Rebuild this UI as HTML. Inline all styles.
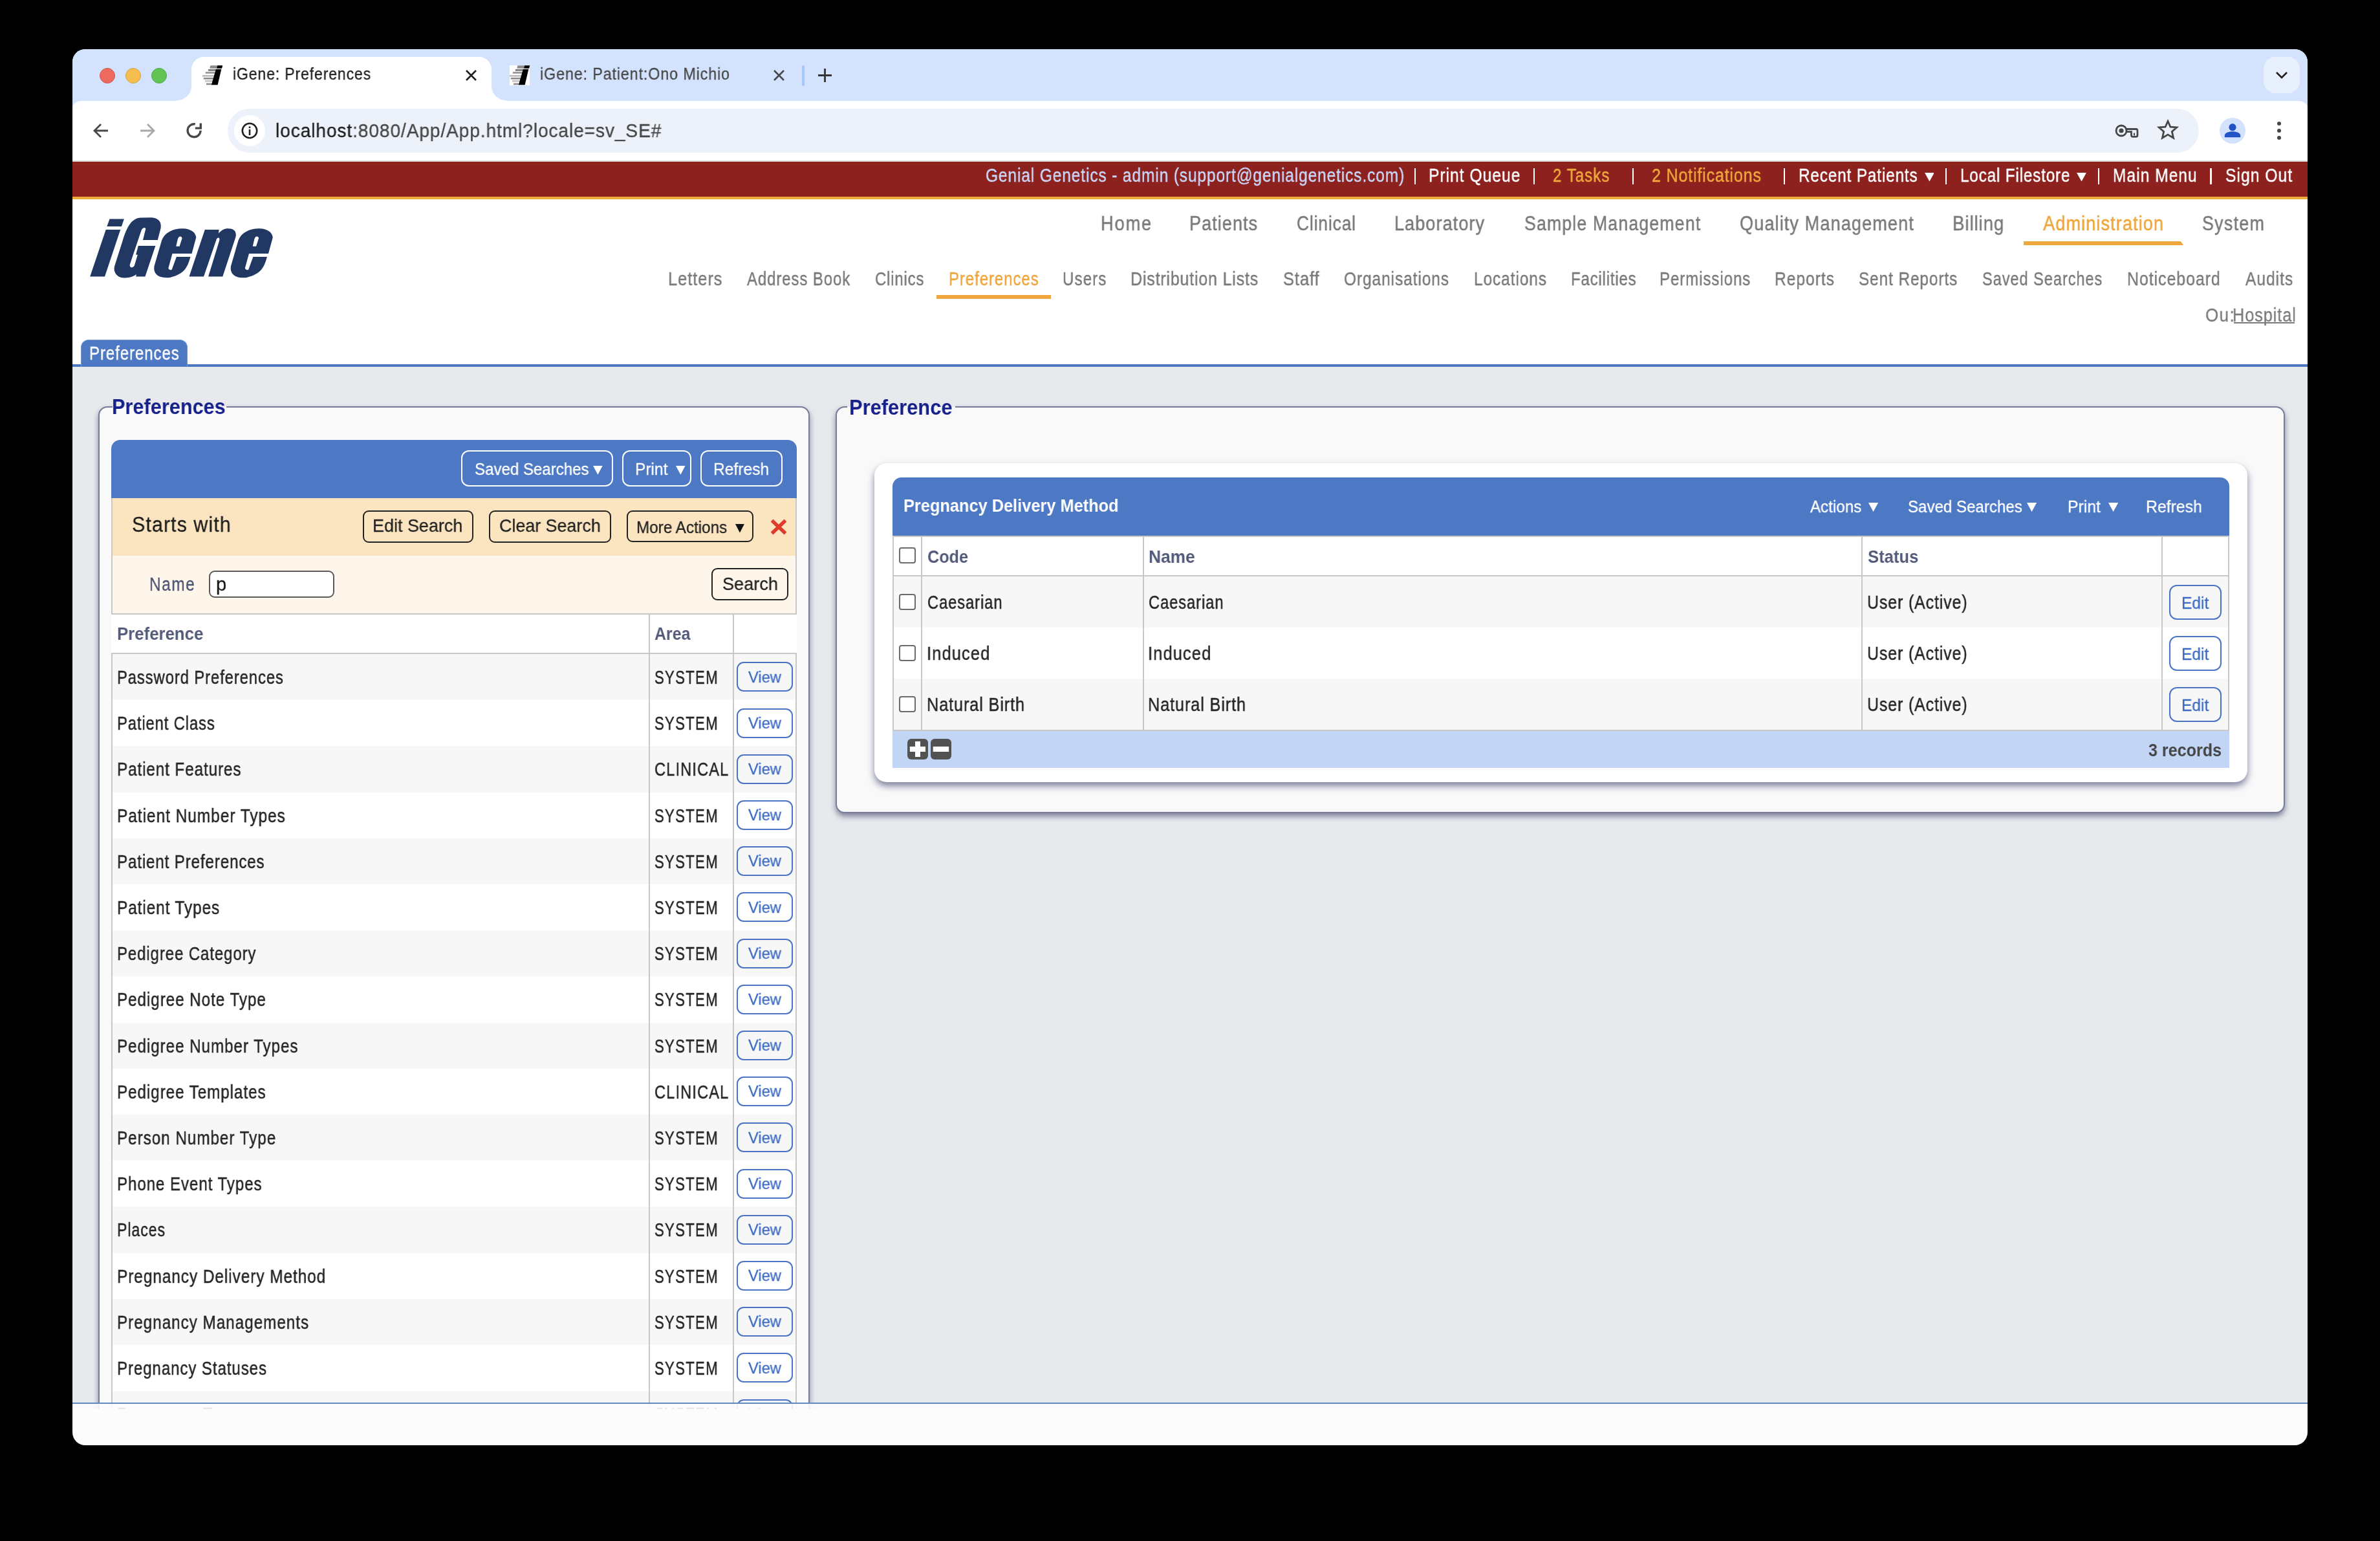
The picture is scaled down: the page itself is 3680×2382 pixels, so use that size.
<!DOCTYPE html>
<html><head><meta charset="utf-8"><title>iGene: Preferences</title>
<style>
html,body{margin:0;padding:0;}
body{width:3680px;height:2382px;background:#000;position:relative;overflow:hidden;font-family:"Liberation Sans",sans-serif;}
.a{position:absolute;box-sizing:border-box;}
.t{position:absolute;white-space:nowrap;line-height:1;transform-origin:0 0;will-change:transform;}
</style></head><body>

<div class="a" style="left:112px;top:76px;width:3456px;height:2158px;border-radius:20px;overflow:hidden;background:#fcfcfc">
<div class="a" style="left:-112px;top:-76px;width:3680px;height:2382px">
<div class="a" style="left:112px;top:76px;width:3456.00px;height:124.00px;background:#d3e3fd;"></div>
<div class="a" style="left:112px;top:155.5px;width:3456.00px;height:94.50px;background:#ffffff;border-radius:14px 14px 0 0/11px 11px 0 0;"></div>
<svg class="a" style="left:272px;top:88px" width="512" height="68" viewBox="0 0 512 68"><path d="M0 67.5 A24 22 0 0 0 24 45.5 L24 19 A19 19 0 0 1 43 0 L469 0 A19 19 0 0 1 488 19 L488 45.5 A24 22 0 0 0 512 67.5 L512 68 L0 68 Z" fill="#fff"/></svg>
<div class="a" style="left:112px;top:248px;width:3456.00px;height:2.00px;background:#d9d9d9;"></div>
<div class="a" style="left:112px;top:250px;width:3456.00px;height:54.00px;background:#8c211e;"></div>
<div class="a" style="left:112px;top:304px;width:3456.00px;height:4.00px;background:#f0a93c;"></div>
<div class="a" style="left:112px;top:308px;width:3456.00px;height:255.00px;background:#ffffff;"></div>
<div class="a" style="left:112px;top:563px;width:3456.00px;height:4.00px;background:#4a76c2;"></div>
<div class="a" style="left:112px;top:567px;width:3456.00px;height:1611.00px;background:#e8e9ed;"></div>
<div class="a" style="left:154px;top:105px;width:24px;height:24px;border-radius:50%;background:#ee6a5f;border:1px solid #d0584c"></div>
<div class="a" style="left:194px;top:105px;width:24px;height:24px;border-radius:50%;background:#f5bd4f;border:1px solid #d6a243"></div>
<div class="a" style="left:234px;top:105px;width:24px;height:24px;border-radius:50%;background:#61c454;border:1px solid #52a842"></div>
<svg class="a" style="left:313px;top:101px" width="32" height="31" viewBox="0 0 32 31"><g><path d="M12.4 0.2H31.2L30 4.8H11.2Z" fill="#8a8a8a"/><path d="M23.3 0.2H31.2L30 4.8H22.1Z" fill="#000"/><rect x="8.9" y="6" width="12.5" height="2.8" fill="#7a7a7a"/><rect x="4.8" y="10" width="16" height="2.8" fill="#9a9a9a"/><rect x="0" y="15" width="19" height="2.7" fill="#bdbdbd"/><rect x="1.8" y="19" width="16.5" height="2.6" fill="#8c8c8c"/><rect x="4" y="23" width="12" height="2.6" fill="#c4c4c4"/><rect x="6" y="27.6" width="8" height="2.6" fill="#8c8c8c"/><path d="M20.9 6H29.3L23.6 30.2H13.8Z" fill="#000"/></g></svg>
<div class="a" style="left:788px;top:101px;width:31px;height:31px;background:#fff"></div>
<svg class="a" style="left:788px;top:101px" width="32" height="31" viewBox="0 0 32 31"><g><path d="M12.4 0.2H31.2L30 4.8H11.2Z" fill="#8a8a8a"/><path d="M23.3 0.2H31.2L30 4.8H22.1Z" fill="#000"/><rect x="8.9" y="6" width="12.5" height="2.8" fill="#7a7a7a"/><rect x="4.8" y="10" width="16" height="2.8" fill="#9a9a9a"/><rect x="0" y="15" width="19" height="2.7" fill="#bdbdbd"/><rect x="1.8" y="19" width="16.5" height="2.6" fill="#8c8c8c"/><rect x="4" y="23" width="12" height="2.6" fill="#c4c4c4"/><rect x="6" y="27.6" width="8" height="2.6" fill="#8c8c8c"/><path d="M20.9 6H29.3L23.6 30.2H13.8Z" fill="#000"/></g></svg>
<div class="t" style="left:359.5px;top:102.4px;font-size:25.36px;color:#1f1f1f;letter-spacing:0.96px;transform:scaleX(0.9076);-webkit-text-stroke:0.3px #1f1f1f;">iGene: Preferences</div>
<div class="t" style="left:835.4px;top:102.4px;font-size:25.36px;color:#474747;letter-spacing:0.92px;transform:scaleX(0.9211);-webkit-text-stroke:0.3px #474747;">iGene: Patient:Ono Michio</div>
<svg class="a" style="left:718.5px;top:106.5px" width="19" height="19" viewBox="-9.5 -9.5 19 19"><path d="M-7.5 -7.5L7.5 7.5M7.5 -7.5L-7.5 7.5" stroke="#1f1f1f" stroke-width="2.6" stroke-linecap="butt"/></svg>
<svg class="a" style="left:1194.5px;top:106.5px" width="19" height="19" viewBox="-9.5 -9.5 19 19"><path d="M-7.5 -7.5L7.5 7.5M7.5 -7.5L-7.5 7.5" stroke="#474747" stroke-width="2.6" stroke-linecap="butt"/></svg>
<div class="a" style="left:1240px;top:101px;width:4.00px;height:32.00px;background:#a8c7fa;border-radius:2px;"></div>
<svg class="a" style="left:1263px;top:104px" width="25" height="25" viewBox="-12.5 -12.5 25 25"><path d="M-10.5 0H10.5M0 -10.5V10.5" stroke="#333" stroke-width="2.8"/></svg>
<div class="a" style="left:3500px;top:88px;width:56.00px;height:56.00px;background:#e8effd;border-radius:18px;"></div>
<svg class="a" style="left:3516px;top:108px" width="24" height="16" viewBox="0 0 24 16"><path d="M4 4L12 12L20 4" fill="none" stroke="#1f1f1f" stroke-width="2.6"/></svg>
<svg class="a" style="left:142px;top:188px" width="28" height="28" viewBox="0 0 28 28"><path d="M25 14H5M14 4L4 14L14 24" fill="none" stroke="#474747" stroke-width="2.8"/></svg>
<svg class="a" style="left:214px;top:188px" width="28" height="28" viewBox="0 0 28 28"><path d="M3 14H23M14 4L24 14L14 24" fill="none" stroke="#a8a8a8" stroke-width="2.8"/></svg>
<svg class="a" style="left:280px;top:182px" width="40" height="40" viewBox="280 182 40 40"><path d="M301.8 191.9A10 10 0 1 0 310.1 201.7" fill="none" stroke="#474747" stroke-width="3.3"/><path d="M308.6 190.4H312V199.8H301.8V196.4H308.6Z" fill="#474747"/></svg>
<div class="a" style="left:352px;top:168px;width:3048.00px;height:68.00px;background:#edf2fa;border-radius:34px;"></div>
<div class="a" style="left:362px;top:178px;width:48px;height:48px;border-radius:50%;background:#fff"></div>
<svg class="a" style="left:372px;top:188px" width="28" height="28" viewBox="0 0 28 28"><circle cx="14" cy="14" r="11.2" fill="none" stroke="#1f1f1f" stroke-width="2.6"/><rect x="12.7" y="12" width="2.6" height="9" fill="#1f1f1f"/><rect x="12.7" y="7.5" width="2.6" height="2.6" fill="#1f1f1f"/></svg>
<div class="t" style="left:425.6px;top:187.6px;font-size:28.70px;color:#474747;letter-spacing:0.91px;-webkit-text-stroke:0.35px #474747;transform:scaleX(0.9806)"><span style="color:#1f1f1f;-webkit-text-stroke:0.35px #1f1f1f">localhost</span>:8080/App/App.html?locale=sv_SE#</div>
<svg class="a" style="left:3266px;top:188px" width="44" height="28" viewBox="3266 188 44 28"><circle cx="3280" cy="202" r="8" fill="none" stroke="#474747" stroke-width="2.8"/><circle cx="3280" cy="202" r="3.6" fill="#474747"/><path d="M3287.5 199.5H3302.5Q3305 199.5 3305 202V209Q3305 211.3 3302.5 211.3H3298Q3295.5 211.3 3295.5 209V203.6H3287.5" fill="none" stroke="#474747" stroke-width="2.8"/><rect x="3299" y="205.5" width="2" height="4" fill="#474747"/></svg>
<svg class="a" style="left:3334px;top:184px" width="36" height="34" viewBox="-18 -17 36 34"><path d="M0 -13.6L3.9 -4.9L13.8 -4.2L6.3 2.4L8.6 12.3L0 7.1L-8.6 12.3L-6.3 2.4L-13.8 -4.2L-3.9 -4.9Z" fill="none" stroke="#474747" stroke-width="2.8" stroke-linejoin="miter"/></svg>
<div class="a" style="left:3432px;top:182px;width:40px;height:40px;border-radius:50%;background:#d3e3fd"></div>
<svg class="a" style="left:3432px;top:182px" width="40" height="40" viewBox="0 0 40 40"><circle cx="20" cy="14.7" r="5.6" fill="#2254c5"/><path d="M7.8 30.3V27.5C7.8 23.5 14 21.3 20 21.3S32.2 23.5 32.2 27.5V30.3Z" fill="#2254c5"/></svg>
<div class="a" style="left:3520.6px;top:187.6px;width:6.8px;height:6.8px;border-radius:50%;background:#474747"></div>
<div class="a" style="left:3520.6px;top:198.6px;width:6.8px;height:6.8px;border-radius:50%;background:#474747"></div>
<div class="a" style="left:3520.6px;top:209.6px;width:6.8px;height:6.8px;border-radius:50%;background:#474747"></div>
<div class="t" style="left:1523.8px;top:256.7px;font-size:28.99px;color:#cad6f8;letter-spacing:1.05px;transform:scaleX(0.8448);-webkit-text-stroke:0.45px #cad6f8;">Genial Genetics - admin (support@genialgenetics.com)</div>
<div class="a" style="left:2186.5px;top:260px;width:2.60px;height:25.00px;background:#ffffff;"></div>
<div class="a" style="left:2370.7px;top:260px;width:2.60px;height:25.00px;background:#ffffff;"></div>
<div class="a" style="left:2523.7px;top:260px;width:2.60px;height:25.00px;background:#ffffff;"></div>
<div class="a" style="left:2757.7px;top:260px;width:2.60px;height:25.00px;background:#ffffff;"></div>
<div class="a" style="left:3007.7px;top:260px;width:2.60px;height:25.00px;background:#ffffff;"></div>
<div class="a" style="left:3243.7px;top:260px;width:2.60px;height:25.00px;background:#ffffff;"></div>
<div class="a" style="left:3417.3999999999996px;top:260px;width:2.60px;height:25.00px;background:#ffffff;"></div>
<div class="t" style="left:2209.4px;top:256.7px;font-size:28.99px;color:#ffffff;letter-spacing:1.14px;transform:scaleX(0.8512);-webkit-text-stroke:0.45px #ffffff;">Print Queue</div>
<div class="t" style="left:2401.4px;top:256.7px;font-size:28.99px;color:#f0a83c;letter-spacing:1.20px;transform:scaleX(0.8325);-webkit-text-stroke:0.45px #f0a83c;">2 Tasks</div>
<div class="t" style="left:2553.8px;top:256.7px;font-size:28.99px;color:#f0a83c;letter-spacing:0.97px;transform:scaleX(0.8632);-webkit-text-stroke:0.45px #f0a83c;">2 Notifications</div>
<div class="t" style="left:2781.4px;top:256.7px;font-size:28.99px;color:#ffffff;letter-spacing:1.08px;transform:scaleX(0.8358);-webkit-text-stroke:0.45px #ffffff;">Recent Patients</div>
<svg class="a" style="left:2975.7px;top:267px" width="14.8" height="13.5" viewBox="0 0 14.80 13.50"><path d="M0 0H14.80L7.40 13.50Z" fill="#ffffff"/></svg>
<div class="t" style="left:3031.0px;top:256.7px;font-size:28.99px;color:#ffffff;letter-spacing:0.99px;transform:scaleX(0.8375);-webkit-text-stroke:0.45px #ffffff;">Local Filestore</div>
<svg class="a" style="left:3211px;top:267px" width="15.0" height="13.5" viewBox="0 0 15.00 13.50"><path d="M0 0H15.00L7.50 13.50Z" fill="#ffffff"/></svg>
<div class="t" style="left:3267.0px;top:256.7px;font-size:28.99px;color:#ffffff;letter-spacing:1.31px;transform:scaleX(0.8424);-webkit-text-stroke:0.45px #ffffff;">Main Menu</div>
<div class="t" style="left:3440.9px;top:256.7px;font-size:28.99px;color:#ffffff;letter-spacing:1.20px;transform:scaleX(0.8515);-webkit-text-stroke:0.45px #ffffff;">Sign Out</div>
<svg class="a" style="left:0;top:0" width="3680" height="600" viewBox="0 0 3680 600"><path d="M169.5,338.5 L191.9,338.5 L187.9,349.9 L165.4,349.9 Z" fill="#203862" fill-rule="evenodd"/><path d="M163.7,354.9 L186.2,354.9 L162,427.6 L139.2,427.6 Z" fill="#203862" fill-rule="evenodd"/><path d="M217.9,336.5 L234.3,336.3 C245,337 250,343 248.6,352.5 L243.8,370.9 L221.0,370.9 L225.1,354.5 C226,351.5 221,350.5 218.6,355.9 L200.9,408.4 C200,412 203,416 207.7,411.1 L212.8,393.7 L210.1,393.7 L213.8,380.1 L240.4,380.1 L224.4,427.6 L210.1,427.6 L211.1,424.0 C205,428.5 198,429.5 191.3,429.5 C180,429 175,420 177.0,411.8 L190.0,370.9 C196,352 203,337 217.9,336.5 Z" fill="#203862" fill-rule="evenodd"/><path d="M282.9,353.2 C293.5,353.5 302.5,358 303.3,367.1 L296.5,392.1 L266.5,392.1 L260.4,414.3 C260.0,416.5 264.0,418.5 265.8,416.4 L272.9,397.1 L294.4,397.1 C290.5,412 285.5,424 262.9,428.9 C243.5,431 236.5,422 238.6,411 L250.1,371.4 C254.5,360 266.5,353 282.9,353.2 Z M272.2,380.7 L277.6,380.7 L281.5,368.6 C282.0,366 278.5,364.5 276.9,366.1 C275.5,367.5 274.5,370 274.4,371.4 Z" fill="#203862" fill-rule="evenodd"/><path d="M316.8,355 L338.6,355 L337.9,360.7 C343,355 348,353.2 352.9,353.2 C362,353.2 366,358 364.6,365.7 L344.3,427.5 L322.1,427.5 L339.3,371.4 C340,368 338,365.5 335,369.3 L315,427.5 L292.5,427.5 Z" fill="#203862" fill-rule="evenodd"/><path d="M401.4,353.2 C412.0,353.5 421.0,358 421.8,367.1 L415.0,392.1 L385.0,392.1 L378.9,414.3 C378.5,416.5 382.5,418.5 384.3,416.4 L391.4,397.1 L412.9,397.1 C409.0,412 404.0,424 381.4,428.9 C362.0,431 355.0,422 357.1,411 L368.6,371.4 C373.0,360 385.0,353 401.4,353.2 Z M390.7,380.7 L396.1,380.7 L400.0,368.6 C400.5,366 397.0,364.5 395.4,366.1 C394.0,367.5 393.0,370 392.9,371.4 Z" fill="#203862" fill-rule="evenodd"/></svg>
<div class="t" style="left:1701.8px;top:330.8px;font-size:30.87px;color:#7a7a7a;letter-spacing:1.97px;transform:scaleX(0.8862);-webkit-text-stroke:0.5px #7a7a7a;">Home</div>
<div class="t" style="left:1838.8px;top:330.8px;font-size:30.87px;color:#7a7a7a;letter-spacing:1.16px;transform:scaleX(0.8783);-webkit-text-stroke:0.5px #7a7a7a;">Patients</div>
<div class="t" style="left:2004.6px;top:330.8px;font-size:30.87px;color:#7a7a7a;letter-spacing:1.03px;transform:scaleX(0.8534);-webkit-text-stroke:0.5px #7a7a7a;">Clinical</div>
<div class="t" style="left:2155.8px;top:330.8px;font-size:30.87px;color:#7a7a7a;letter-spacing:1.21px;transform:scaleX(0.8775);-webkit-text-stroke:0.5px #7a7a7a;">Laboratory</div>
<div class="t" style="left:2356.5px;top:330.8px;font-size:30.87px;color:#7a7a7a;letter-spacing:1.37px;transform:scaleX(0.8631);-webkit-text-stroke:0.5px #7a7a7a;">Sample Management</div>
<div class="t" style="left:2689.5px;top:330.8px;font-size:30.87px;color:#7a7a7a;letter-spacing:1.25px;transform:scaleX(0.8785);-webkit-text-stroke:0.5px #7a7a7a;">Quality Management</div>
<div class="t" style="left:3018.8px;top:330.8px;font-size:30.87px;color:#7a7a7a;letter-spacing:0.98px;transform:scaleX(0.8990);-webkit-text-stroke:0.5px #7a7a7a;">Billing</div>
<div class="t" style="left:3158.9px;top:330.8px;font-size:30.87px;color:#efa63c;letter-spacing:1.12px;transform:scaleX(0.8853);-webkit-text-stroke:0.5px #efa63c;">Administration</div>
<div class="t" style="left:3404.8px;top:330.8px;font-size:30.87px;color:#7a7a7a;letter-spacing:1.50px;transform:scaleX(0.8684);-webkit-text-stroke:0.5px #7a7a7a;">System</div>
<div class="a" style="left:3128.5px;top:372.5px;width:247.50px;height:6.50px;background:#efa63c;clip-path:polygon(0 0,98.2% 0,100% 100%,0 100%);"></div>
<div class="t" style="left:1032.9px;top:416.5px;font-size:28.84px;color:#7a7a7a;letter-spacing:1.06px;transform:scaleX(0.8838);-webkit-text-stroke:0.45px #7a7a7a;">Letters</div>
<div class="t" style="left:1155.2px;top:416.5px;font-size:28.84px;color:#7a7a7a;letter-spacing:1.23px;transform:scaleX(0.8252);-webkit-text-stroke:0.45px #7a7a7a;">Address Book</div>
<div class="t" style="left:1353.4px;top:416.5px;font-size:28.84px;color:#7a7a7a;letter-spacing:1.03px;transform:scaleX(0.8272);-webkit-text-stroke:0.45px #7a7a7a;">Clinics</div>
<div class="t" style="left:1466.5px;top:416.5px;font-size:28.84px;color:#efa63c;letter-spacing:1.14px;transform:scaleX(0.8308);-webkit-text-stroke:0.45px #efa63c;">Preferences</div>
<div class="t" style="left:1643.2px;top:416.5px;font-size:28.84px;color:#7a7a7a;letter-spacing:1.35px;transform:scaleX(0.8344);-webkit-text-stroke:0.45px #7a7a7a;">Users</div>
<div class="t" style="left:1748.3px;top:416.5px;font-size:28.84px;color:#7a7a7a;letter-spacing:0.92px;transform:scaleX(0.8683);-webkit-text-stroke:0.45px #7a7a7a;">Distribution Lists</div>
<div class="t" style="left:1983.9px;top:416.5px;font-size:28.84px;color:#7a7a7a;letter-spacing:1.08px;transform:scaleX(0.8815);-webkit-text-stroke:0.45px #7a7a7a;">Staff</div>
<div class="t" style="left:2078.2px;top:416.5px;font-size:28.84px;color:#7a7a7a;letter-spacing:1.10px;transform:scaleX(0.8478);-webkit-text-stroke:0.45px #7a7a7a;">Organisations</div>
<div class="t" style="left:2278.6px;top:416.5px;font-size:28.84px;color:#7a7a7a;letter-spacing:1.13px;transform:scaleX(0.8462);-webkit-text-stroke:0.45px #7a7a7a;">Locations</div>
<div class="t" style="left:2428.7px;top:416.5px;font-size:28.84px;color:#7a7a7a;letter-spacing:0.91px;transform:scaleX(0.8358);-webkit-text-stroke:0.45px #7a7a7a;">Facilities</div>
<div class="t" style="left:2566.3px;top:416.5px;font-size:28.84px;color:#7a7a7a;letter-spacing:1.15px;transform:scaleX(0.8324);-webkit-text-stroke:0.45px #7a7a7a;">Permissions</div>
<div class="t" style="left:2743.9px;top:416.5px;font-size:28.84px;color:#7a7a7a;letter-spacing:1.22px;transform:scaleX(0.8507);-webkit-text-stroke:0.45px #7a7a7a;">Reports</div>
<div class="t" style="left:2874.2px;top:416.5px;font-size:28.84px;color:#7a7a7a;letter-spacing:1.13px;transform:scaleX(0.8425);-webkit-text-stroke:0.45px #7a7a7a;">Sent Reports</div>
<div class="t" style="left:3065.2px;top:416.5px;font-size:28.84px;color:#7a7a7a;letter-spacing:1.21px;transform:scaleX(0.8156);-webkit-text-stroke:0.45px #7a7a7a;">Saved Searches</div>
<div class="t" style="left:3288.7px;top:416.5px;font-size:28.84px;color:#7a7a7a;letter-spacing:1.14px;transform:scaleX(0.8617);-webkit-text-stroke:0.45px #7a7a7a;">Noticeboard</div>
<div class="t" style="left:3471.5px;top:416.5px;font-size:28.84px;color:#7a7a7a;letter-spacing:1.19px;transform:scaleX(0.8498);-webkit-text-stroke:0.45px #7a7a7a;">Audits</div>
<div class="a" style="left:1448px;top:455.5px;width:176.50px;height:6.20px;background:#efa63c;"></div>
<div class="t" style="left:3409.7px;top:472.5px;font-size:28.84px;color:#7a7a7a;letter-spacing:1.60px;transform:scaleX(0.8993);-webkit-text-stroke:0.3px #7a7a7a;">Ou:</div>
<div class="t" style="left:3451.9px;top:472.5px;font-size:28.84px;color:#7a7a7a;letter-spacing:1.07px;transform:scaleX(0.8760);-webkit-text-stroke:0.3px #7a7a7a;">Hospital</div>
<div class="a" style="left:3454px;top:498px;width:94.00px;height:2.00px;background:#7a7a7a;"></div>
<div class="a" style="left:125px;top:525px;width:165px;height:42px;background:#4d79c4;border:1.5px solid #6f95d2;border-bottom:none;border-radius:12px 12px 0 0"></div>
<div class="t" style="left:138.4px;top:532.4px;font-size:28.99px;color:#ffffff;letter-spacing:1.15px;transform:scaleX(0.8273);-webkit-text-stroke:0.35px #ffffff;">Preferences</div>
<div class="a" style="left:112px;top:567px;width:3456px;height:1611px;overflow:hidden">
<div class="a" style="left:-112px;top:-567px;width:3680px;height:2382px">
<div class="a" style="left:152px;top:628px;width:1100px;height:1700px;background:#f9f9fa;border:2px solid #757b99;border-radius:14px;box-shadow:0 5px 9px rgba(55,62,100,0.6);"></div>
<div class="a" style="left:173.5px;top:620px;width:176.00px;height:20.00px;background:#f9f9fa;"></div>
<div class="a" style="left:173.5px;top:600px;width:176.00px;height:29.00px;background:#e8e9ed;"></div>
<div class="t" style="left:172.9px;top:612.7px;font-size:32.75px;color:#16208a;font-weight:bold;transform:scaleX(0.9371);">Preferences</div>
<div class="a" style="left:1292px;top:628px;width:2241px;height:629px;background:#f9f9fa;border:2px solid #757b99;border-radius:14px;box-shadow:0 5px 9px rgba(55,62,100,0.6);"></div>
<div class="a" style="left:1310px;top:620px;width:167.00px;height:20.00px;background:#f9f9fa;"></div>
<div class="a" style="left:1310px;top:600px;width:167.00px;height:29.00px;background:#e8e9ed;"></div>
<div class="t" style="left:1313.4px;top:612.9px;font-size:33.33px;color:#16208a;font-weight:bold;transform:scaleX(0.9259);">Preference</div>
<div class="a" style="left:172px;top:680px;width:1060px;height:90px;background:#4c78c4;border-radius:14px 14px 0 0"></div>
<div class="a" style="left:172px;top:769.5px;width:1060.00px;height:89.00px;background:#fbe5c0;"></div>
<div class="a" style="left:172px;top:858.5px;width:1060.00px;height:90.50px;background:#fef6eb;"></div>
<div class="a" style="left:172px;top:769.5px;width:2.00px;height:1630.50px;background:#c8c8c8;"></div>
<div class="a" style="left:1230px;top:769.5px;width:2.00px;height:1630.50px;background:#c8c8c8;"></div>
<div class="a" style="left:713.3px;top:696.3px;width:235.2px;height:55.4px;border:2px solid #ffffff;border-radius:12px;background:transparent"></div>
<div class="a" style="left:961.5px;top:696.3px;width:107.9px;height:55.4px;border:2px solid #ffffff;border-radius:12px;background:transparent"></div>
<div class="a" style="left:1082.5px;top:696.3px;width:127.8px;height:55.4px;border:2px solid #ffffff;border-radius:12px;background:transparent"></div>
<div class="t" style="left:734.4px;top:712.0px;font-size:26.09px;color:#ffffff;transform:scaleX(0.9229);-webkit-text-stroke:0.3px #ffffff;">Saved Searches</div>
<svg class="a" style="left:917.4px;top:720px" width="14.7" height="13.7" viewBox="0 0 14.70 13.70"><path d="M0 0H14.70L7.35 13.70Z" fill="#ffffff"/></svg>
<div class="t" style="left:981.7px;top:712.0px;font-size:26.09px;color:#ffffff;transform:scaleX(0.9397);-webkit-text-stroke:0.3px #ffffff;">Print</div>
<svg class="a" style="left:1045.4px;top:720px" width="14.6" height="13.7" viewBox="0 0 14.60 13.70"><path d="M0 0H14.60L7.30 13.70Z" fill="#ffffff"/></svg>
<div class="t" style="left:1102.7px;top:712.0px;font-size:26.09px;color:#ffffff;transform:scaleX(0.9441);-webkit-text-stroke:0.3px #ffffff;">Refresh</div>
<div class="t" style="left:203.6px;top:793.7px;font-size:33.04px;color:#1c1c1c;letter-spacing:1.13px;transform:scaleX(0.9232);-webkit-text-stroke:0.3px #1c1c1c;">Starts with</div>
<div class="a" style="left:560.5px;top:788.6px;width:171.9px;height:50.4px;border:2px solid #222222;border-radius:9px;background:transparent"></div>
<div class="t" style="left:576.4px;top:799.2px;font-size:27.97px;color:#222222;transform:scaleX(0.9638);-webkit-text-stroke:0.3px #222222;">Edit Search</div>
<div class="a" style="left:755.5px;top:789px;width:189.9px;height:50.0px;border:2px solid #222222;border-radius:9px;background:transparent"></div>
<div class="t" style="left:771.9px;top:799.2px;font-size:27.97px;color:#222222;transform:scaleX(0.9600);-webkit-text-stroke:0.3px #222222;">Clear Search</div>
<div class="a" style="left:968.6px;top:788.6px;width:196.6px;height:49.6px;border:2px solid #222222;border-radius:9px;background:transparent"></div>
<div class="t" style="left:984.3px;top:802.7px;font-size:24.93px;color:#222222;transform:scaleX(0.9738);-webkit-text-stroke:0.3px #222222;">More Actions</div>
<svg class="a" style="left:1137.4px;top:810px" width="13.9" height="13.5" viewBox="0 0 13.90 13.50"><path d="M0 0H13.90L6.95 13.50Z" fill="#111111"/></svg>
<svg class="a" style="left:1190px;top:801px" width="28" height="27" viewBox="0 0 28 27"><path d="M3.5 3.5L24.5 23.5M24.5 3.5L3.5 23.5" stroke="#e03a2f" stroke-width="5.5" stroke-linecap="butt"/></svg>
<div class="t" style="left:231.3px;top:889.2px;font-size:28.99px;color:#4b5374;letter-spacing:1.85px;transform:scaleX(0.8417);-webkit-text-stroke:0.3px #4b5374;">Name</div>
<div class="a" style="left:322.8px;top:881.8px;width:194.6px;height:42.2px;border:2px solid #5a5a5a;border-radius:9px;background:#ffffff"></div>
<div class="t" style="left:333.5px;top:889.2px;font-size:28.99px;color:#1a1a1a;-webkit-text-stroke:0.3px #1a1a1a;">p</div>
<div class="a" style="left:1099.6px;top:878px;width:119.3px;height:50.0px;border:2px solid #222222;border-radius:9px;background:transparent"></div>
<div class="t" style="left:1116.5px;top:888.6px;font-size:27.54px;color:#222222;transform:scaleX(0.9845);-webkit-text-stroke:0.3px #222222;">Search</div>
<div class="a" style="left:172px;top:948px;width:1060.00px;height:63.00px;background:#ffffff;"></div>
<div class="a" style="left:172px;top:948px;width:1060.00px;height:2.00px;background:#c8c8c8;"></div>
<div class="a" style="left:172px;top:1009px;width:1060.00px;height:2.00px;background:#c8c8c8;"></div>
<div class="t" style="left:181.0px;top:967.2px;font-size:26.81px;color:#535a7a;font-weight:bold;transform:scaleX(0.9617);">Preference</div>
<div class="t" style="left:1012.0px;top:967.2px;font-size:26.81px;color:#535a7a;font-weight:bold;transform:scaleX(0.9289);">Area</div>
<div class="a" style="left:174px;top:1011.0px;width:1056.00px;height:71.20px;background:#f7f7f7;"></div>
<div class="t" style="left:181.1px;top:1033.0px;font-size:28.70px;color:#262626;letter-spacing:1.13px;transform:scaleX(0.8283);-webkit-text-stroke:0.5px #262626;">Password Preferences</div>
<div class="t" style="left:1011.7px;top:1033.0px;font-size:28.70px;color:#262626;letter-spacing:1.72px;transform:scaleX(0.7707);-webkit-text-stroke:0.5px #262626;">SYSTEM</div>
<div class="a" style="left:1139.2px;top:1023.3px;width:86.5px;height:46.1px;border:2px solid #4a73c4;border-radius:11px;background:transparent"></div>
<div class="t" style="left:1156.7px;top:1034.5px;font-size:24.06px;color:#3d6bc3;transform:scaleX(0.9846);-webkit-text-stroke:0.3px #3d6bc3;">View</div>
<div class="a" style="left:174px;top:1082.2px;width:1056.00px;height:71.20px;background:#ffffff;"></div>
<div class="t" style="left:181.1px;top:1104.2px;font-size:28.70px;color:#262626;letter-spacing:1.04px;transform:scaleX(0.8307);-webkit-text-stroke:0.5px #262626;">Patient Class</div>
<div class="t" style="left:1011.7px;top:1104.2px;font-size:28.70px;color:#262626;letter-spacing:1.72px;transform:scaleX(0.7707);-webkit-text-stroke:0.5px #262626;">SYSTEM</div>
<div class="a" style="left:1139.2px;top:1094.5px;width:86.5px;height:46.1px;border:2px solid #4a73c4;border-radius:11px;background:transparent"></div>
<div class="t" style="left:1156.7px;top:1105.7px;font-size:24.06px;color:#3d6bc3;transform:scaleX(0.9846);-webkit-text-stroke:0.3px #3d6bc3;">View</div>
<div class="a" style="left:174px;top:1153.4px;width:1056.00px;height:71.20px;background:#f7f7f7;"></div>
<div class="t" style="left:181.1px;top:1175.4px;font-size:28.70px;color:#262626;letter-spacing:1.04px;transform:scaleX(0.8470);-webkit-text-stroke:0.5px #262626;">Patient Features</div>
<div class="t" style="left:1011.5px;top:1175.4px;font-size:28.70px;color:#262626;letter-spacing:1.36px;transform:scaleX(0.8237);-webkit-text-stroke:0.5px #262626;">CLINICAL</div>
<div class="a" style="left:1139.2px;top:1165.7px;width:86.5px;height:46.1px;border:2px solid #4a73c4;border-radius:11px;background:transparent"></div>
<div class="t" style="left:1156.7px;top:1176.9px;font-size:24.06px;color:#3d6bc3;transform:scaleX(0.9846);-webkit-text-stroke:0.3px #3d6bc3;">View</div>
<div class="a" style="left:174px;top:1224.6px;width:1056.00px;height:71.20px;background:#ffffff;"></div>
<div class="t" style="left:181.0px;top:1246.6px;font-size:28.70px;color:#262626;letter-spacing:1.11px;transform:scaleX(0.8536);-webkit-text-stroke:0.5px #262626;">Patient Number Types</div>
<div class="t" style="left:1011.7px;top:1246.6px;font-size:28.70px;color:#262626;letter-spacing:1.72px;transform:scaleX(0.7707);-webkit-text-stroke:0.5px #262626;">SYSTEM</div>
<div class="a" style="left:1139.2px;top:1236.8999999999999px;width:86.5px;height:46.1px;border:2px solid #4a73c4;border-radius:11px;background:transparent"></div>
<div class="t" style="left:1156.7px;top:1248.1px;font-size:24.06px;color:#3d6bc3;transform:scaleX(0.9846);-webkit-text-stroke:0.3px #3d6bc3;">View</div>
<div class="a" style="left:174px;top:1295.8px;width:1056.00px;height:71.20px;background:#f7f7f7;"></div>
<div class="t" style="left:181.1px;top:1317.8px;font-size:28.70px;color:#262626;letter-spacing:1.04px;transform:scaleX(0.8410);-webkit-text-stroke:0.5px #262626;">Patient Preferences</div>
<div class="t" style="left:1011.7px;top:1317.8px;font-size:28.70px;color:#262626;letter-spacing:1.72px;transform:scaleX(0.7707);-webkit-text-stroke:0.5px #262626;">SYSTEM</div>
<div class="a" style="left:1139.2px;top:1308.1px;width:86.5px;height:46.1px;border:2px solid #4a73c4;border-radius:11px;background:transparent"></div>
<div class="t" style="left:1156.7px;top:1319.3px;font-size:24.06px;color:#3d6bc3;transform:scaleX(0.9846);-webkit-text-stroke:0.3px #3d6bc3;">View</div>
<div class="a" style="left:174px;top:1367.0px;width:1056.00px;height:71.20px;background:#ffffff;"></div>
<div class="t" style="left:181.0px;top:1389.0px;font-size:28.70px;color:#262626;letter-spacing:1.07px;transform:scaleX(0.8501);-webkit-text-stroke:0.5px #262626;">Patient Types</div>
<div class="t" style="left:1011.7px;top:1389.0px;font-size:28.70px;color:#262626;letter-spacing:1.72px;transform:scaleX(0.7707);-webkit-text-stroke:0.5px #262626;">SYSTEM</div>
<div class="a" style="left:1139.2px;top:1379.3px;width:86.5px;height:46.1px;border:2px solid #4a73c4;border-radius:11px;background:transparent"></div>
<div class="t" style="left:1156.7px;top:1390.5px;font-size:24.06px;color:#3d6bc3;transform:scaleX(0.9846);-webkit-text-stroke:0.3px #3d6bc3;">View</div>
<div class="a" style="left:174px;top:1438.2px;width:1056.00px;height:71.20px;background:#f7f7f7;"></div>
<div class="t" style="left:181.1px;top:1460.2px;font-size:28.70px;color:#262626;letter-spacing:1.11px;transform:scaleX(0.8346);-webkit-text-stroke:0.5px #262626;">Pedigree Category</div>
<div class="t" style="left:1011.7px;top:1460.2px;font-size:28.70px;color:#262626;letter-spacing:1.72px;transform:scaleX(0.7707);-webkit-text-stroke:0.5px #262626;">SYSTEM</div>
<div class="a" style="left:1139.2px;top:1450.5px;width:86.5px;height:46.1px;border:2px solid #4a73c4;border-radius:11px;background:transparent"></div>
<div class="t" style="left:1156.7px;top:1461.7px;font-size:24.06px;color:#3d6bc3;transform:scaleX(0.9846);-webkit-text-stroke:0.3px #3d6bc3;">View</div>
<div class="a" style="left:174px;top:1509.4px;width:1056.00px;height:71.20px;background:#ffffff;"></div>
<div class="t" style="left:181.1px;top:1531.4px;font-size:28.70px;color:#262626;letter-spacing:1.11px;transform:scaleX(0.8450);-webkit-text-stroke:0.5px #262626;">Pedigree Note Type</div>
<div class="t" style="left:1011.7px;top:1531.4px;font-size:28.70px;color:#262626;letter-spacing:1.72px;transform:scaleX(0.7707);-webkit-text-stroke:0.5px #262626;">SYSTEM</div>
<div class="a" style="left:1139.2px;top:1521.7px;width:86.5px;height:46.1px;border:2px solid #4a73c4;border-radius:11px;background:transparent"></div>
<div class="t" style="left:1156.7px;top:1532.9px;font-size:24.06px;color:#3d6bc3;transform:scaleX(0.9846);-webkit-text-stroke:0.3px #3d6bc3;">View</div>
<div class="a" style="left:174px;top:1580.6px;width:1056.00px;height:71.20px;background:#f7f7f7;"></div>
<div class="t" style="left:181.1px;top:1602.6px;font-size:28.70px;color:#262626;letter-spacing:1.15px;transform:scaleX(0.8421);-webkit-text-stroke:0.5px #262626;">Pedigree Number Types</div>
<div class="t" style="left:1011.7px;top:1602.6px;font-size:28.70px;color:#262626;letter-spacing:1.72px;transform:scaleX(0.7707);-webkit-text-stroke:0.5px #262626;">SYSTEM</div>
<div class="a" style="left:1139.2px;top:1592.8999999999999px;width:86.5px;height:46.1px;border:2px solid #4a73c4;border-radius:11px;background:transparent"></div>
<div class="t" style="left:1156.7px;top:1604.1px;font-size:24.06px;color:#3d6bc3;transform:scaleX(0.9846);-webkit-text-stroke:0.3px #3d6bc3;">View</div>
<div class="a" style="left:174px;top:1651.8000000000002px;width:1056.00px;height:71.20px;background:#ffffff;"></div>
<div class="t" style="left:181.1px;top:1673.8px;font-size:28.70px;color:#262626;letter-spacing:1.11px;transform:scaleX(0.8444);-webkit-text-stroke:0.5px #262626;">Pedigree Templates</div>
<div class="t" style="left:1011.5px;top:1673.8px;font-size:28.70px;color:#262626;letter-spacing:1.36px;transform:scaleX(0.8237);-webkit-text-stroke:0.5px #262626;">CLINICAL</div>
<div class="a" style="left:1139.2px;top:1664.1000000000001px;width:86.5px;height:46.1px;border:2px solid #4a73c4;border-radius:11px;background:transparent"></div>
<div class="t" style="left:1156.7px;top:1675.3px;font-size:24.06px;color:#3d6bc3;transform:scaleX(0.9846);-webkit-text-stroke:0.3px #3d6bc3;">View</div>
<div class="a" style="left:174px;top:1723.0px;width:1056.00px;height:71.20px;background:#f7f7f7;"></div>
<div class="t" style="left:181.1px;top:1745.0px;font-size:28.70px;color:#262626;letter-spacing:1.18px;transform:scaleX(0.8437);-webkit-text-stroke:0.5px #262626;">Person Number Type</div>
<div class="t" style="left:1011.7px;top:1745.0px;font-size:28.70px;color:#262626;letter-spacing:1.72px;transform:scaleX(0.7707);-webkit-text-stroke:0.5px #262626;">SYSTEM</div>
<div class="a" style="left:1139.2px;top:1735.3px;width:86.5px;height:46.1px;border:2px solid #4a73c4;border-radius:11px;background:transparent"></div>
<div class="t" style="left:1156.7px;top:1746.5px;font-size:24.06px;color:#3d6bc3;transform:scaleX(0.9846);-webkit-text-stroke:0.3px #3d6bc3;">View</div>
<div class="a" style="left:174px;top:1794.2px;width:1056.00px;height:71.20px;background:#ffffff;"></div>
<div class="t" style="left:181.1px;top:1816.2px;font-size:28.70px;color:#262626;letter-spacing:1.15px;transform:scaleX(0.8385);-webkit-text-stroke:0.5px #262626;">Phone Event Types</div>
<div class="t" style="left:1011.7px;top:1816.2px;font-size:28.70px;color:#262626;letter-spacing:1.72px;transform:scaleX(0.7707);-webkit-text-stroke:0.5px #262626;">SYSTEM</div>
<div class="a" style="left:1139.2px;top:1806.5px;width:86.5px;height:46.1px;border:2px solid #4a73c4;border-radius:11px;background:transparent"></div>
<div class="t" style="left:1156.7px;top:1817.7px;font-size:24.06px;color:#3d6bc3;transform:scaleX(0.9846);-webkit-text-stroke:0.3px #3d6bc3;">View</div>
<div class="a" style="left:174px;top:1865.4px;width:1056.00px;height:71.20px;background:#f7f7f7;"></div>
<div class="t" style="left:181.2px;top:1887.4px;font-size:28.70px;color:#262626;letter-spacing:1.25px;transform:scaleX(0.8020);-webkit-text-stroke:0.5px #262626;">Places</div>
<div class="t" style="left:1011.7px;top:1887.4px;font-size:28.70px;color:#262626;letter-spacing:1.72px;transform:scaleX(0.7707);-webkit-text-stroke:0.5px #262626;">SYSTEM</div>
<div class="a" style="left:1139.2px;top:1877.7px;width:86.5px;height:46.1px;border:2px solid #4a73c4;border-radius:11px;background:transparent"></div>
<div class="t" style="left:1156.7px;top:1888.9px;font-size:24.06px;color:#3d6bc3;transform:scaleX(0.9846);-webkit-text-stroke:0.3px #3d6bc3;">View</div>
<div class="a" style="left:174px;top:1936.6px;width:1056.00px;height:71.20px;background:#ffffff;"></div>
<div class="t" style="left:181.0px;top:1958.6px;font-size:28.70px;color:#262626;letter-spacing:1.09px;transform:scaleX(0.8513);-webkit-text-stroke:0.5px #262626;">Pregnancy Delivery Method</div>
<div class="t" style="left:1011.7px;top:1958.6px;font-size:28.70px;color:#262626;letter-spacing:1.72px;transform:scaleX(0.7707);-webkit-text-stroke:0.5px #262626;">SYSTEM</div>
<div class="a" style="left:1139.2px;top:1948.8999999999999px;width:86.5px;height:46.1px;border:2px solid #4a73c4;border-radius:11px;background:transparent"></div>
<div class="t" style="left:1156.7px;top:1960.1px;font-size:24.06px;color:#3d6bc3;transform:scaleX(0.9846);-webkit-text-stroke:0.3px #3d6bc3;">View</div>
<div class="a" style="left:174px;top:2007.8000000000002px;width:1056.00px;height:71.20px;background:#f7f7f7;"></div>
<div class="t" style="left:181.1px;top:2029.8px;font-size:28.70px;color:#262626;letter-spacing:1.22px;transform:scaleX(0.8429);-webkit-text-stroke:0.5px #262626;">Pregnancy Managements</div>
<div class="t" style="left:1011.7px;top:2029.8px;font-size:28.70px;color:#262626;letter-spacing:1.72px;transform:scaleX(0.7707);-webkit-text-stroke:0.5px #262626;">SYSTEM</div>
<div class="a" style="left:1139.2px;top:2020.1000000000001px;width:86.5px;height:46.1px;border:2px solid #4a73c4;border-radius:11px;background:transparent"></div>
<div class="t" style="left:1156.7px;top:2031.3px;font-size:24.06px;color:#3d6bc3;transform:scaleX(0.9846);-webkit-text-stroke:0.3px #3d6bc3;">View</div>
<div class="a" style="left:174px;top:2079.0px;width:1056.00px;height:71.20px;background:#ffffff;"></div>
<div class="t" style="left:181.1px;top:2101.0px;font-size:28.70px;color:#262626;letter-spacing:1.12px;transform:scaleX(0.8376);-webkit-text-stroke:0.5px #262626;">Pregnancy Statuses</div>
<div class="t" style="left:1011.7px;top:2101.0px;font-size:28.70px;color:#262626;letter-spacing:1.72px;transform:scaleX(0.7707);-webkit-text-stroke:0.5px #262626;">SYSTEM</div>
<div class="a" style="left:1139.2px;top:2091.3px;width:86.5px;height:46.1px;border:2px solid #4a73c4;border-radius:11px;background:transparent"></div>
<div class="t" style="left:1156.7px;top:2102.5px;font-size:24.06px;color:#3d6bc3;transform:scaleX(0.9846);-webkit-text-stroke:0.3px #3d6bc3;">View</div>
<div class="a" style="left:174px;top:2150.2px;width:1056.00px;height:71.20px;background:#f7f7f7;"></div>
<div class="t" style="left:181.0px;top:2172.2px;font-size:28.70px;color:#262626;letter-spacing:1.17px;transform:scaleX(0.8505);-webkit-text-stroke:0.5px #262626;">Pregnancy Types</div>
<div class="t" style="left:1011.7px;top:2172.2px;font-size:28.70px;color:#262626;letter-spacing:1.72px;transform:scaleX(0.7707);-webkit-text-stroke:0.5px #262626;">SYSTEM</div>
<div class="a" style="left:1139.2px;top:2162.5px;width:86.5px;height:46.1px;border:2px solid #4a73c4;border-radius:11px;background:transparent"></div>
<div class="t" style="left:1156.7px;top:2173.7px;font-size:24.06px;color:#3d6bc3;transform:scaleX(0.9846);-webkit-text-stroke:0.3px #3d6bc3;">View</div>
<div class="a" style="left:174px;top:2221.4px;width:1056.00px;height:71.20px;background:#ffffff;"></div>
<div class="t" style="left:181.0px;top:2243.4px;font-size:28.70px;color:#262626;letter-spacing:1.15px;transform:scaleX(0.8505);-webkit-text-stroke:0.5px #262626;">Preterm Types</div>
<div class="t" style="left:1011.7px;top:2243.4px;font-size:28.70px;color:#262626;letter-spacing:1.72px;transform:scaleX(0.7707);-webkit-text-stroke:0.5px #262626;">SYSTEM</div>
<div class="a" style="left:1139.2px;top:2233.7000000000003px;width:86.5px;height:46.1px;border:2px solid #4a73c4;border-radius:11px;background:transparent"></div>
<div class="t" style="left:1156.7px;top:2244.9px;font-size:24.06px;color:#3d6bc3;transform:scaleX(0.9846);-webkit-text-stroke:0.3px #3d6bc3;">View</div>
<div class="a" style="left:1003.4px;top:948px;width:2.00px;height:1452.00px;background:#c8c8c8;"></div>
<div class="a" style="left:1133.2px;top:948px;width:2.00px;height:1452.00px;background:#c8c8c8;"></div>
<div class="a" style="left:1300px;top:690px;width:2225px;height:535px;overflow:hidden"><div class="a" style="left:52px;top:26px;width:2123px;height:493px;background:#ffffff;border-radius:19px;box-shadow:0 6px 11px rgba(50,58,100,0.62)"></div></div>
<div class="a" style="left:1380px;top:738px;width:2066.5px;height:90px;background:#4c78c4;border-radius:14px 14px 0 0"></div>
<div class="t" style="left:1396.9px;top:768.3px;font-size:27.54px;color:#ffffff;font-weight:bold;transform:scaleX(0.9210);">Pregnancy Delivery Method</div>
<div class="t" style="left:2799.2px;top:770.6px;font-size:24.93px;color:#ffffff;transform:scaleX(0.9703);-webkit-text-stroke:0.3px #ffffff;">Actions</div>
<svg class="a" style="left:2889.4px;top:777.3px" width="15.1" height="14.1" viewBox="0 0 15.10 14.10"><path d="M0 0H15.10L7.55 14.10Z" fill="#ffffff"/></svg>
<div class="t" style="left:2949.5px;top:770.6px;font-size:24.93px;color:#ffffff;transform:scaleX(0.9668);-webkit-text-stroke:0.3px #ffffff;">Saved Searches</div>
<svg class="a" style="left:3133.8px;top:777.3px" width="15.1" height="14.1" viewBox="0 0 15.10 14.10"><path d="M0 0H15.10L7.55 14.10Z" fill="#ffffff"/></svg>
<div class="t" style="left:3196.7px;top:770.6px;font-size:24.93px;color:#ffffff;transform:scaleX(0.9939);-webkit-text-stroke:0.3px #ffffff;">Print</div>
<svg class="a" style="left:3260px;top:777.3px" width="15.3" height="14.1" viewBox="0 0 15.30 14.10"><path d="M0 0H15.30L7.65 14.10Z" fill="#ffffff"/></svg>
<div class="t" style="left:3317.7px;top:770.6px;font-size:24.93px;color:#ffffff;transform:scaleX(0.9940);-webkit-text-stroke:0.3px #ffffff;">Refresh</div>
<div class="a" style="left:1380px;top:828px;width:2066.50px;height:63.00px;background:#ffffff;"></div>
<div class="a" style="left:1380px;top:828px;width:2066.50px;height:2.00px;background:#c8c8c8;"></div>
<div class="a" style="left:1380px;top:889px;width:2066.50px;height:2.00px;background:#c8c8c8;"></div>
<div class="a" style="left:1390.3px;top:846.4px;width:26px;height:25px;border:2px solid #6b6b6b;border-radius:4px;background:#fff"></div>
<div class="t" style="left:1434.0px;top:847.0px;font-size:27.25px;color:#535a7a;font-weight:bold;transform:scaleX(0.9242);">Code</div>
<div class="t" style="left:1776.3px;top:847.0px;font-size:27.25px;color:#535a7a;font-weight:bold;transform:scaleX(0.9664);">Name</div>
<div class="t" style="left:2887.9px;top:847.4px;font-size:27.25px;color:#535a7a;font-weight:bold;transform:scaleX(0.9397);">Status</div>
<div class="a" style="left:1382px;top:891px;width:2062.70px;height:79.00px;background:#f7f7f7;"></div>
<div class="a" style="left:1390.2px;top:917.5px;width:26px;height:25px;border:2px solid #6b6b6b;border-radius:4px;background:#fff"></div>
<div class="t" style="left:1433.7px;top:917.4px;font-size:28.99px;color:#262626;letter-spacing:1.21px;transform:scaleX(0.8146);-webkit-text-stroke:0.5px #262626;">Caesarian</div>
<div class="t" style="left:1776.3px;top:917.4px;font-size:28.99px;color:#262626;letter-spacing:1.21px;transform:scaleX(0.8146);-webkit-text-stroke:0.5px #262626;">Caesarian</div>
<div class="t" style="left:2887.1px;top:917.4px;font-size:28.99px;color:#262626;letter-spacing:1.03px;transform:scaleX(0.8595);-webkit-text-stroke:0.5px #262626;">User (Active)</div>
<div class="a" style="left:3354.2px;top:903.5px;width:80.4px;height:54.0px;border:2px solid #4a73c4;border-radius:12px;background:transparent"></div>
<div class="t" style="left:3373.0px;top:920.1px;font-size:25.22px;color:#3d6bc3;transform:scaleX(0.9732);-webkit-text-stroke:0.3px #3d6bc3;">Edit</div>
<div class="a" style="left:1382px;top:970px;width:2062.70px;height:79.00px;background:#ffffff;"></div>
<div class="a" style="left:1390.2px;top:996.5px;width:26px;height:25px;border:2px solid #6b6b6b;border-radius:4px;background:#fff"></div>
<div class="t" style="left:1432.5px;top:996.4px;font-size:28.99px;color:#262626;letter-spacing:1.24px;transform:scaleX(0.8801);-webkit-text-stroke:0.5px #262626;">Induced</div>
<div class="t" style="left:1775.1px;top:996.4px;font-size:28.99px;color:#262626;letter-spacing:1.24px;transform:scaleX(0.8801);-webkit-text-stroke:0.5px #262626;">Induced</div>
<div class="t" style="left:2887.1px;top:996.4px;font-size:28.99px;color:#262626;letter-spacing:1.03px;transform:scaleX(0.8595);-webkit-text-stroke:0.5px #262626;">User (Active)</div>
<div class="a" style="left:3354.2px;top:982.5px;width:80.4px;height:54.0px;border:2px solid #4a73c4;border-radius:12px;background:transparent"></div>
<div class="t" style="left:3373.0px;top:999.1px;font-size:25.22px;color:#3d6bc3;transform:scaleX(0.9732);-webkit-text-stroke:0.3px #3d6bc3;">Edit</div>
<div class="a" style="left:1382px;top:1049px;width:2062.70px;height:79.00px;background:#f7f7f7;"></div>
<div class="a" style="left:1390.2px;top:1075.5px;width:26px;height:25px;border:2px solid #6b6b6b;border-radius:4px;background:#fff"></div>
<div class="t" style="left:1432.8px;top:1075.4px;font-size:28.99px;color:#262626;letter-spacing:0.98px;transform:scaleX(0.8737);-webkit-text-stroke:0.5px #262626;">Natural Birth</div>
<div class="t" style="left:1775.4px;top:1075.4px;font-size:28.99px;color:#262626;letter-spacing:0.98px;transform:scaleX(0.8737);-webkit-text-stroke:0.5px #262626;">Natural Birth</div>
<div class="t" style="left:2887.1px;top:1075.4px;font-size:28.99px;color:#262626;letter-spacing:1.03px;transform:scaleX(0.8595);-webkit-text-stroke:0.5px #262626;">User (Active)</div>
<div class="a" style="left:3354.2px;top:1061.5px;width:80.4px;height:54.0px;border:2px solid #4a73c4;border-radius:12px;background:transparent"></div>
<div class="t" style="left:3373.0px;top:1078.1px;font-size:25.22px;color:#3d6bc3;transform:scaleX(0.9732);-webkit-text-stroke:0.3px #3d6bc3;">Edit</div>
<div class="a" style="left:1380px;top:1128px;width:2066.50px;height:2.00px;background:#c8c8c8;"></div>
<div class="a" style="left:1380px;top:828px;width:2.00px;height:302.00px;background:#c8c8c8;"></div>
<div class="a" style="left:1423.5px;top:828px;width:2.00px;height:302.00px;background:#c8c8c8;"></div>
<div class="a" style="left:1767px;top:828px;width:2.00px;height:302.00px;background:#c8c8c8;"></div>
<div class="a" style="left:2878.3px;top:828px;width:2.00px;height:302.00px;background:#c8c8c8;"></div>
<div class="a" style="left:3342px;top:828px;width:2.00px;height:302.00px;background:#c8c8c8;"></div>
<div class="a" style="left:3444.7px;top:828px;width:2.00px;height:302.00px;background:#c8c8c8;"></div>
<div class="a" style="left:1380px;top:1130px;width:2066.50px;height:56.60px;background:#c2d5f5;"></div>
<svg class="a" style="left:1403px;top:1142px" width="70" height="32" viewBox="0 0 70 32"><rect x="0" y="0" width="32" height="32" rx="6" fill="#525252"/><path d="M16 4V28M3.8 16H28" stroke="#fff" stroke-width="8"/><rect x="36" y="0" width="32" height="32" rx="6" fill="#525252"/><path d="M39.7 16H64.1" stroke="#fff" stroke-width="8"/></svg>
<div class="t" style="left:3322.4px;top:1145.4px;font-size:28.26px;color:#454545;font-weight:bold;transform:scaleX(0.8885);">3 records</div>
</div></div>
<div class="a" style="left:112px;top:2170px;width:3456.00px;height:8.00px;background:rgba(252,252,252,0.9);"></div>
<div class="a" style="left:112px;top:2168px;width:3456.00px;height:2.00px;background:#6089c3;"></div>
</div></div>
</body></html>
